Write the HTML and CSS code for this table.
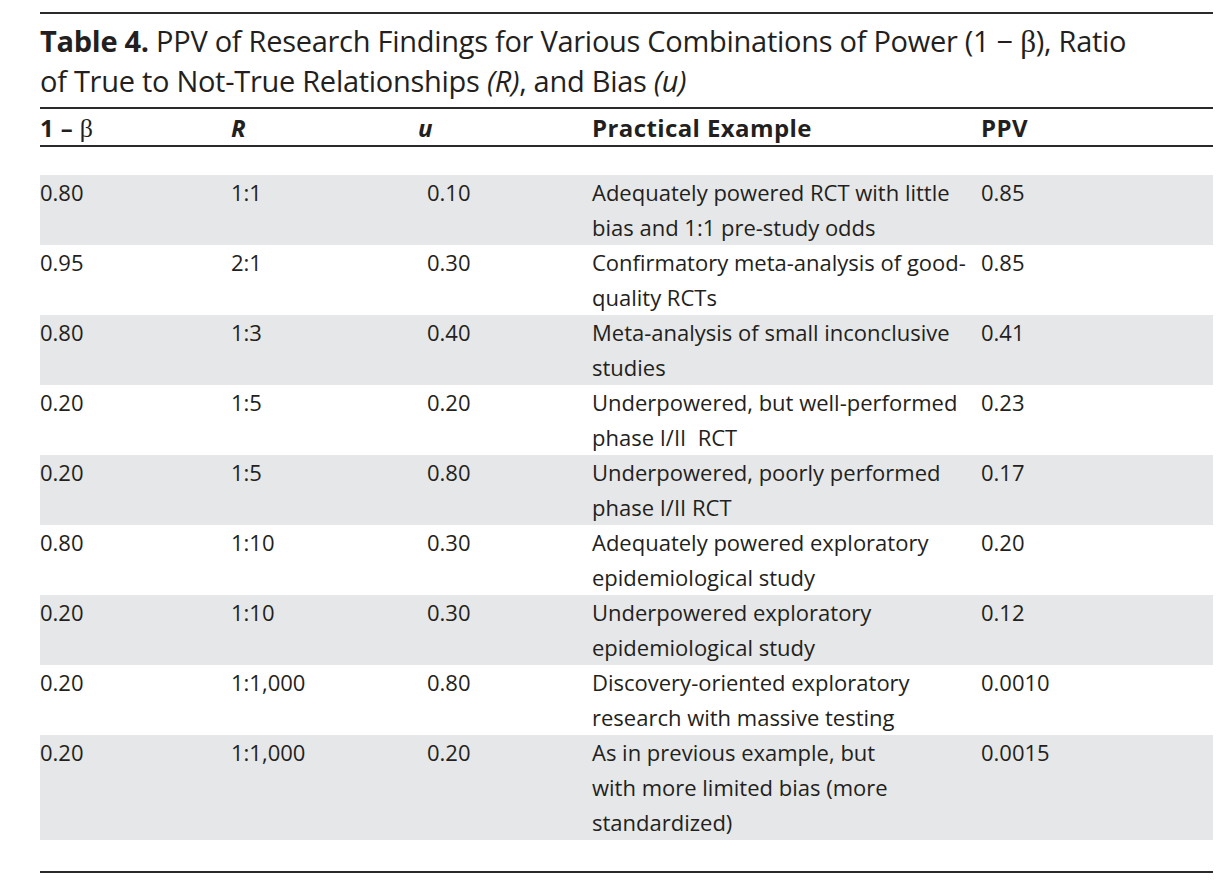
FILE: index.html
```html
<!DOCTYPE html>
<html lang="en">
<head>
<meta charset="utf-8">
<title>Table 4</title>
<link rel="stylesheet" href="styles.css">
</head>
<body>
<div class="sheet">
  <h1 class="title"><b>Table 4.</b> PPV of Research Findings for Various Combinations of Power (1 − <span class="beta">β</span>), Ratio<br>of True to Not-True Relationships <i>(R)</i>, and Bias <i>(u)</i></h1>
  <div class="table" role="table">
    <div class="head row" role="row">
      <div class="cell">1 – <span class="beta">β</span></div>
      <div class="cell"><i>R</i></div>
      <div class="cell"><i>u</i></div>
      <div class="cell">Practical Example</div>
      <div class="cell">PPV</div>
    </div>
    <div class="body">
      <div class="row" role="row"><div class="cell">0.80</div><div class="cell">1:1</div><div class="cell c3">0.10</div><div class="cell">Adequately powered RCT with little<br>bias and 1:1 pre-study odds</div><div class="cell">0.85</div></div>
      <div class="row" role="row"><div class="cell">0.95</div><div class="cell">2:1</div><div class="cell c3">0.30</div><div class="cell">Confirmatory meta-analysis of good-<br>quality RCTs</div><div class="cell">0.85</div></div>
      <div class="row" role="row"><div class="cell">0.80</div><div class="cell">1:3</div><div class="cell c3">0.40</div><div class="cell">Meta-analysis of small inconclusive<br>studies</div><div class="cell">0.41</div></div>
      <div class="row" role="row"><div class="cell">0.20</div><div class="cell">1:5</div><div class="cell c3">0.20</div><div class="cell">Underpowered, but well-performed<br>phase I/II&nbsp; RCT</div><div class="cell">0.23</div></div>
      <div class="row" role="row"><div class="cell">0.20</div><div class="cell">1:5</div><div class="cell c3">0.80</div><div class="cell">Underpowered, poorly performed<br>phase I/II RCT</div><div class="cell">0.17</div></div>
      <div class="row" role="row"><div class="cell">0.80</div><div class="cell">1:10</div><div class="cell c3">0.30</div><div class="cell">Adequately powered exploratory<br>epidemiological study</div><div class="cell">0.20</div></div>
      <div class="row" role="row"><div class="cell">0.20</div><div class="cell">1:10</div><div class="cell c3">0.30</div><div class="cell">Underpowered exploratory<br>epidemiological study</div><div class="cell">0.12</div></div>
      <div class="row" role="row"><div class="cell">0.20</div><div class="cell">1:1,000</div><div class="cell c3">0.80</div><div class="cell">Discovery-oriented exploratory<br>research with massive testing</div><div class="cell">0.0010</div></div>
      <div class="row" role="row"><div class="cell">0.20</div><div class="cell">1:1,000</div><div class="cell c3">0.20</div><div class="cell">As in previous example, but<br>with more limited bias (more<br>standardized)</div><div class="cell">0.0015</div></div>
    </div>
  </div>
</div>
</body>
</html>
```

FILE: styles.css
```css
html, body {
  margin: 0;
  padding: 0;
  background: #ffffff;
}

body {
  font-family: "Open Sans", "Noto Sans", sans-serif;
  color: #231f20;
}

.sheet {
  width: 1173px;
  margin-left: 40px;
  padding-top: 12px;
}

.title {
  margin: 0;
  padding-top: 7px;
  border-top: 2px solid #2a2a2a;
  font-size: 29px;
  font-weight: 400;
  line-height: 40px;
  letter-spacing: -0.28px;
  white-space: nowrap;
}

.title b {
  font-weight: 700;
}

.beta {
  font-family: "Liberation Serif", "DejaVu Serif", serif;
  font-weight: 400;
  font-style: normal;
  line-height: 0;
  font-size: 1.08em;
}

.table {
  margin-top: 6px;
  border-top: 2px solid #2a2a2a;
}

.row {
  display: grid;
  grid-template-columns: 191px 187px 174px 389px 232px;
}

.head {
  padding-top: 2px;
  border-bottom: 2px solid #2a2a2a;
  font-size: 24px;
  font-weight: 700;
  line-height: 34px;
  letter-spacing: 0.4px;
}

.head i {
  font-style: italic;
}

.body {
  margin-top: 28px;
  padding-bottom: 31px;
  border-bottom: 2px solid #2a2a2a;
}

.body .row {
  font-size: 22px;
  line-height: 35px;
}

.body .row:nth-child(odd) {
  background: #e6e7e8;
}

.cell {
  white-space: nowrap;
}

.c3 {
  padding-left: 9px;
}
```
